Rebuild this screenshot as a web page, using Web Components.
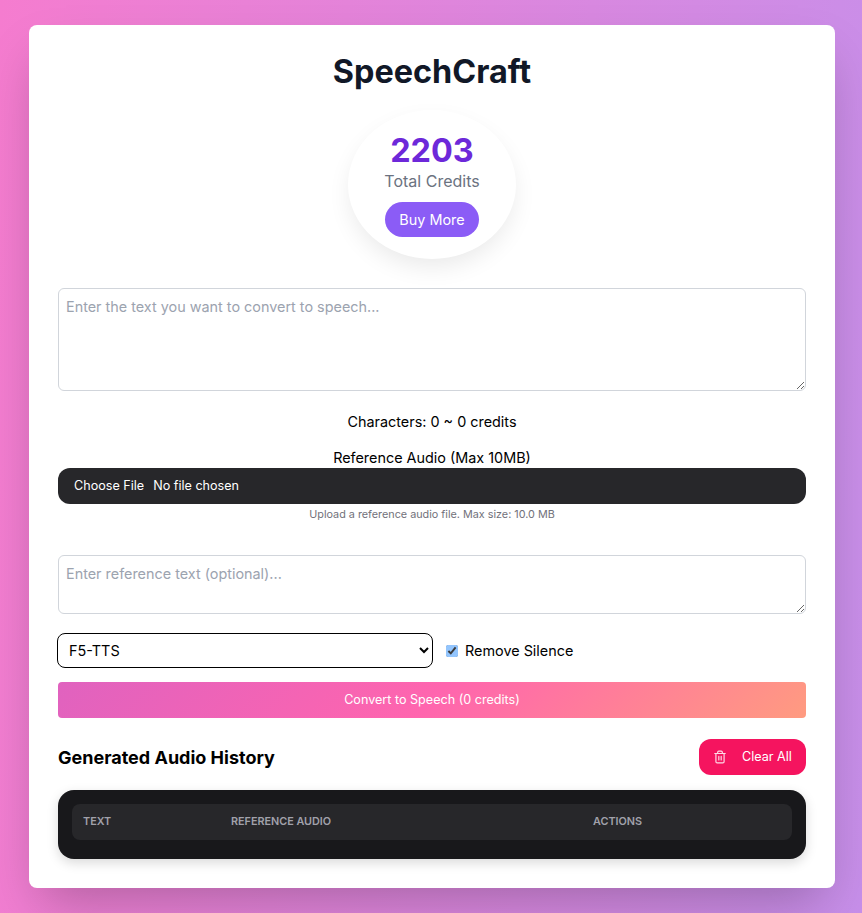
<!DOCTYPE html>
<html lang="en">
<head>
<meta charset="utf-8">
<title>SpeechCraft</title>
<style>
  html, body { margin: 0; height: 100%; }
  body {
    font-family: Inter, "Liberation Sans", sans-serif;
    background: linear-gradient(95deg, #f57ccf, #c78fea);
    background-attachment: fixed;
  }
</style>
</head>
<body>
<speech-app></speech-app>
<script>
class SpeechCredits extends HTMLElement {
  constructor() {
    super();
    this.root = this.attachShadow({ mode: "open" });
    this.root.innerHTML = `
      <style>
        :host { display: flex; justify-content: center; margin-bottom: 29px; }
        .circle {
          width: 168px; height: 149px; box-sizing: border-box;
          padding-top: 22px;
          border-radius: 50%;
          background: #fff;
          box-shadow: 0 10px 25px -3px rgba(0,0,0,.09);
          display: flex; flex-direction: column; align-items: center;
        }
        .num { font-size: 32.4px; line-height: 37px; font-weight: 700; color: #6d28d9; }
        .label { font-size: 16px; line-height: 24px; color: #6b7280; }
        button {
          margin-top: 9px; width: 94px; height: 35px; border: 0; border-radius: 18px;
          background: #8b5cf6; color: #fff; font: 400 14.4px Inter, sans-serif;
        }
      </style>
      <div class="circle">
        <div class="num"><slot name="count"></slot></div>
        <div class="label">Total Credits</div>
        <button>Buy More</button>
      </div>`;
  }
}

class SpeechComposer extends HTMLElement {
  constructor() {
    super();
    this.root = this.attachShadow({ mode: "open" });
    this.root.innerHTML = `
      <style>
        :host { display: block; color: #000; }
        textarea {
          display: block; width: 100%; box-sizing: border-box;
          padding: 8px 7px; border: 1px solid #d1d5db; border-radius: 6px;
          font: 14.4px/20px Inter, sans-serif; resize: vertical; background: #fff;
        }
        textarea::placeholder { color: #9ca3af; }
        .main { height: 103px; }
        .ref { height: 59px; }
        .count { text-align: center; font-size: 14.4px; line-height: 20px; margin: 21px 0 16px; }
        .upload-label { text-align: center; font-size: 14.4px; line-height: 20px; height: 20px; }
        input[type=file] {
          display: block; width: 100%; height: 36px; box-sizing: border-box;
          padding: 0 16px; border-radius: 12px; background: #27272a; color: #fff;
          font: 12.6px/36px Inter, sans-serif;
        }
        input[type=file]::file-selector-button {
          background: none; border: 0; color: #fff; padding: 0; margin-right: 9px;
          font: 12.6px Inter, sans-serif;
        }
        .hint { text-align: center; font-size: 10.8px; line-height: 16px; color: #71717a; margin: 3px 0 32px; }
        .row { display: flex; align-items: center; gap: 13px; margin: 19px 0 14px -1px; }
        select {
          width: 376px; height: 35px; box-sizing: border-box; padding: 0 7px;
          border: 1px solid #000; border-radius: 8px; background: #fff; color: #000;
          font: 14.4px Inter, sans-serif;
        }
        label { display: flex; align-items: center; gap: 7px; font-size: 14.4px; }
        input[type=checkbox] { margin: 0; width: 12px; height: 12px; accent-color: #93c5fd; }
        .go {
          display: block; width: 100%; height: 36px; border: 0; border-radius: 4px;
          padding: 0 0 2px; color: #fff; font: 12.6px Inter, sans-serif;
          background: linear-gradient(135deg, #e062bf, #ff65ae 50%, #ff9b80);
        }
      </style>
      <textarea class="main" placeholder="Enter the text you want to convert to speech..."></textarea>
      <div class="count">Characters: 0 ~ 0 credits</div>
      <div class="upload-label">Reference Audio (Max 10MB)</div>
      <input type="file">
      <div class="hint">Upload a reference audio file. Max size: 10.0 MB</div>
      <textarea class="ref" placeholder="Enter reference text (optional)..."></textarea>
      <div class="row">
        <select><option>F5-TTS</option></select>
        <label><input type="checkbox" checked>Remove Silence</label>
      </div>
      <button class="go">Convert to Speech (0 credits)</button>`;
  }
}

class SpeechHistory extends HTMLElement {
  constructor() {
    super();
    this.root = this.attachShadow({ mode: "open" });
    this.root.innerHTML = `
      <style>
        :host { display: block; margin-top: 21px; }
        .head { display: flex; justify-content: space-between; align-items: center; margin-bottom: 15px; }
        h2 { margin: 0; padding-top: 2px; font-size: 18px; line-height: 28px; font-weight: 700; color: #000; }
        .clear {
          display: flex; align-items: center; gap: 15px;
          width: 107px; height: 36px; box-sizing: border-box; padding: 0 14px 2px;
          border: 0; border-radius: 12px; background: #f5145f; color: #fff;
          font: 400 12.6px Inter, sans-serif;
        }
        .clear svg { width: 14px; height: 14px; flex: none; position: relative; top: 1px; }
        .table {
          padding: 14px 14px 19px; border-radius: 16px; background: #18181b;
          box-shadow: 0 4px 12px rgba(0,0,0,.15);
        }
        .cols {
          display: grid; grid-template-columns: 148px 362px 1fr; align-items: center;
          height: 36px; box-sizing: border-box; padding: 0 11px 2px;
          border-radius: 8px; background: #27272a; color: #a1a1aa;
          font-size: 10.8px; font-weight: 600; text-transform: uppercase;
        }
      </style>
      <div class="head">
        <h2>Generated Audio History</h2>
        <button class="clear">
          <svg viewBox="0 0 24 24" fill="none" stroke="#fff" stroke-opacity=".85" stroke-width="2" stroke-linecap="round" stroke-linejoin="round">
            <path d="M3 6h18M19 6v14a2 2 0 0 1-2 2H7a2 2 0 0 1-2-2V6M8 6V4a2 2 0 0 1 2-2h4a2 2 0 0 1 2 2v2M10 11v6M14 11v6"/>
          </svg>
          Clear All
        </button>
      </div>
      <div class="table">
        <div class="cols"><span>Text</span><span>Reference Audio</span><span>Actions</span></div>
      </div>`;
  }
}

class SpeechApp extends HTMLElement {
  constructor() {
    super();
    this.root = this.attachShadow({ mode: "open" });
    this.root.innerHTML = `
      <style>
        :host { display: block; padding: 25px 27px 25px 29px; }
        .card {
          width: 806px; box-sizing: border-box; padding: 25px 29px 29px;
          background: #fff; border-radius: 8px;
          box-shadow: 0 25px 50px -12px rgba(0,0,0,.25);
        }
        h1 { margin: 0 0 16px; text-align: center; font-size: 32.4px; line-height: 44px; font-weight: 700; color: #111827; }
      </style>
      <div class="card">
        <h1>SpeechCraft</h1>
        <speech-credits><span slot="count">2203</span></speech-credits>
        <speech-composer></speech-composer>
        <speech-history></speech-history>
      </div>`;
  }
}

customElements.define("speech-credits", SpeechCredits);
customElements.define("speech-composer", SpeechComposer);
customElements.define("speech-history", SpeechHistory);
customElements.define("speech-app", SpeechApp);
</script>
</body>
</html>
